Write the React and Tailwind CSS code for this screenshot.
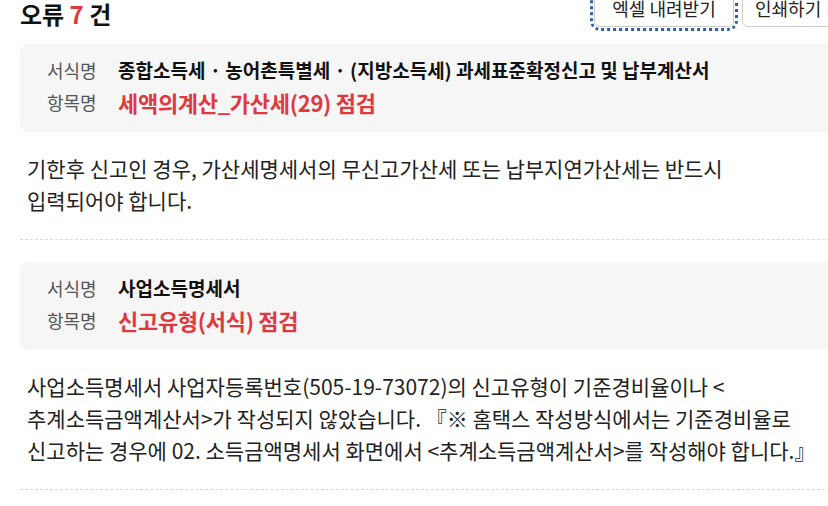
import React from 'react';

const errors = [
  {
    form: '종합소득세 · 농어촌특별세 · (지방소득세) 과세표준확정신고 및 납부계산서',
    item: '세액의계산_가산세(29) 점검',
    lines: [
      '기한후 신고인 경우, 가산세명세서의 무신고가산세 또는 납부지연가산세는 반드시',
      '입력되어야 합니다.',
    ],
  },
  {
    form: '사업소득명세서',
    item: '신고유형(서식) 점검',
    lines: [
      '사업소득명세서 사업자등록번호(505-19-73072)의 신고유형이 기준경비율이나 <',
      '추계소득금액계산서>가 작성되지 않았습니다. 『※ 홈택스 작성방식에서는 기준경비율로',
      '신고하는 경우에 02. 소득금액명세서 화면에서 <추계소득금액계산서>를 작성해야 합니다.』',
    ],
  },
];

const ErrorItem = ({ form, item, lines }) => (
  <div className="border-b border-dashed border-[#d9d9d9] pb-[23px]">
    <div className="rounded-lg bg-[#f6f6f6] px-[27px] pt-[10px] pb-[14px]">
      <div className="flex h-[32px] items-center">
        <span className="w-[71px] shrink-0 text-[18px] text-[#555]">서식명</span>
        <span className="text-[19px] font-bold text-[#111]">{form}</span>
      </div>
      <div className="flex h-[32px] items-center">
        <span className="w-[71px] shrink-0 text-[18px] text-[#555]">항목명</span>
        <span className="text-[22px] font-bold tracking-[-0.3px] text-[#e0383e]">{item}</span>
      </div>
    </div>
    <div className="mt-[20px] px-[7px] text-[21px] leading-[32px] text-[#222]">
      {lines.map((l, i) => (
        <div key={i} className="whitespace-nowrap">{l}</div>
      ))}
    </div>
  </div>
);

export default function App() {
  return (
    <div
      className="h-[506px] w-[828px] overflow-hidden bg-white"
      style={{ fontFamily: '"Noto Sans CJK KR", "Noto Sans", sans-serif' }}
    >
      <div className="mt-[-11px] w-[880px] pl-[20px]">
        <div className="flex h-[38px] items-start justify-between">
          <h2 className="mt-[11px] text-[24px] font-bold leading-[28px] text-[#111]">
            오류 <span className="text-[#e0383e]">7</span> 건
          </h2>
          <div className="mr-[-2px] flex items-center gap-[8px]">
            <button className="h-[38px] w-[140px] rounded-md border border-[#ccc] bg-white text-[18px] text-[#222] outline-3 outline-offset-[1px] outline-dotted outline-[#2f5ea8]">
              엑셀 내려받기
            </button>
            <button className="h-[38px] w-[140px] rounded-md border border-[#ccc] bg-white text-left pl-[12px] text-[18px] text-[#222]">
              인쇄하기
            </button>
          </div>
        </div>
        <div className="mt-[17px] flex flex-col gap-[22px]">
          {errors.map((e, i) => (
            <ErrorItem key={i} {...e} />
          ))}
        </div>
      </div>
    </div>
  );
}
